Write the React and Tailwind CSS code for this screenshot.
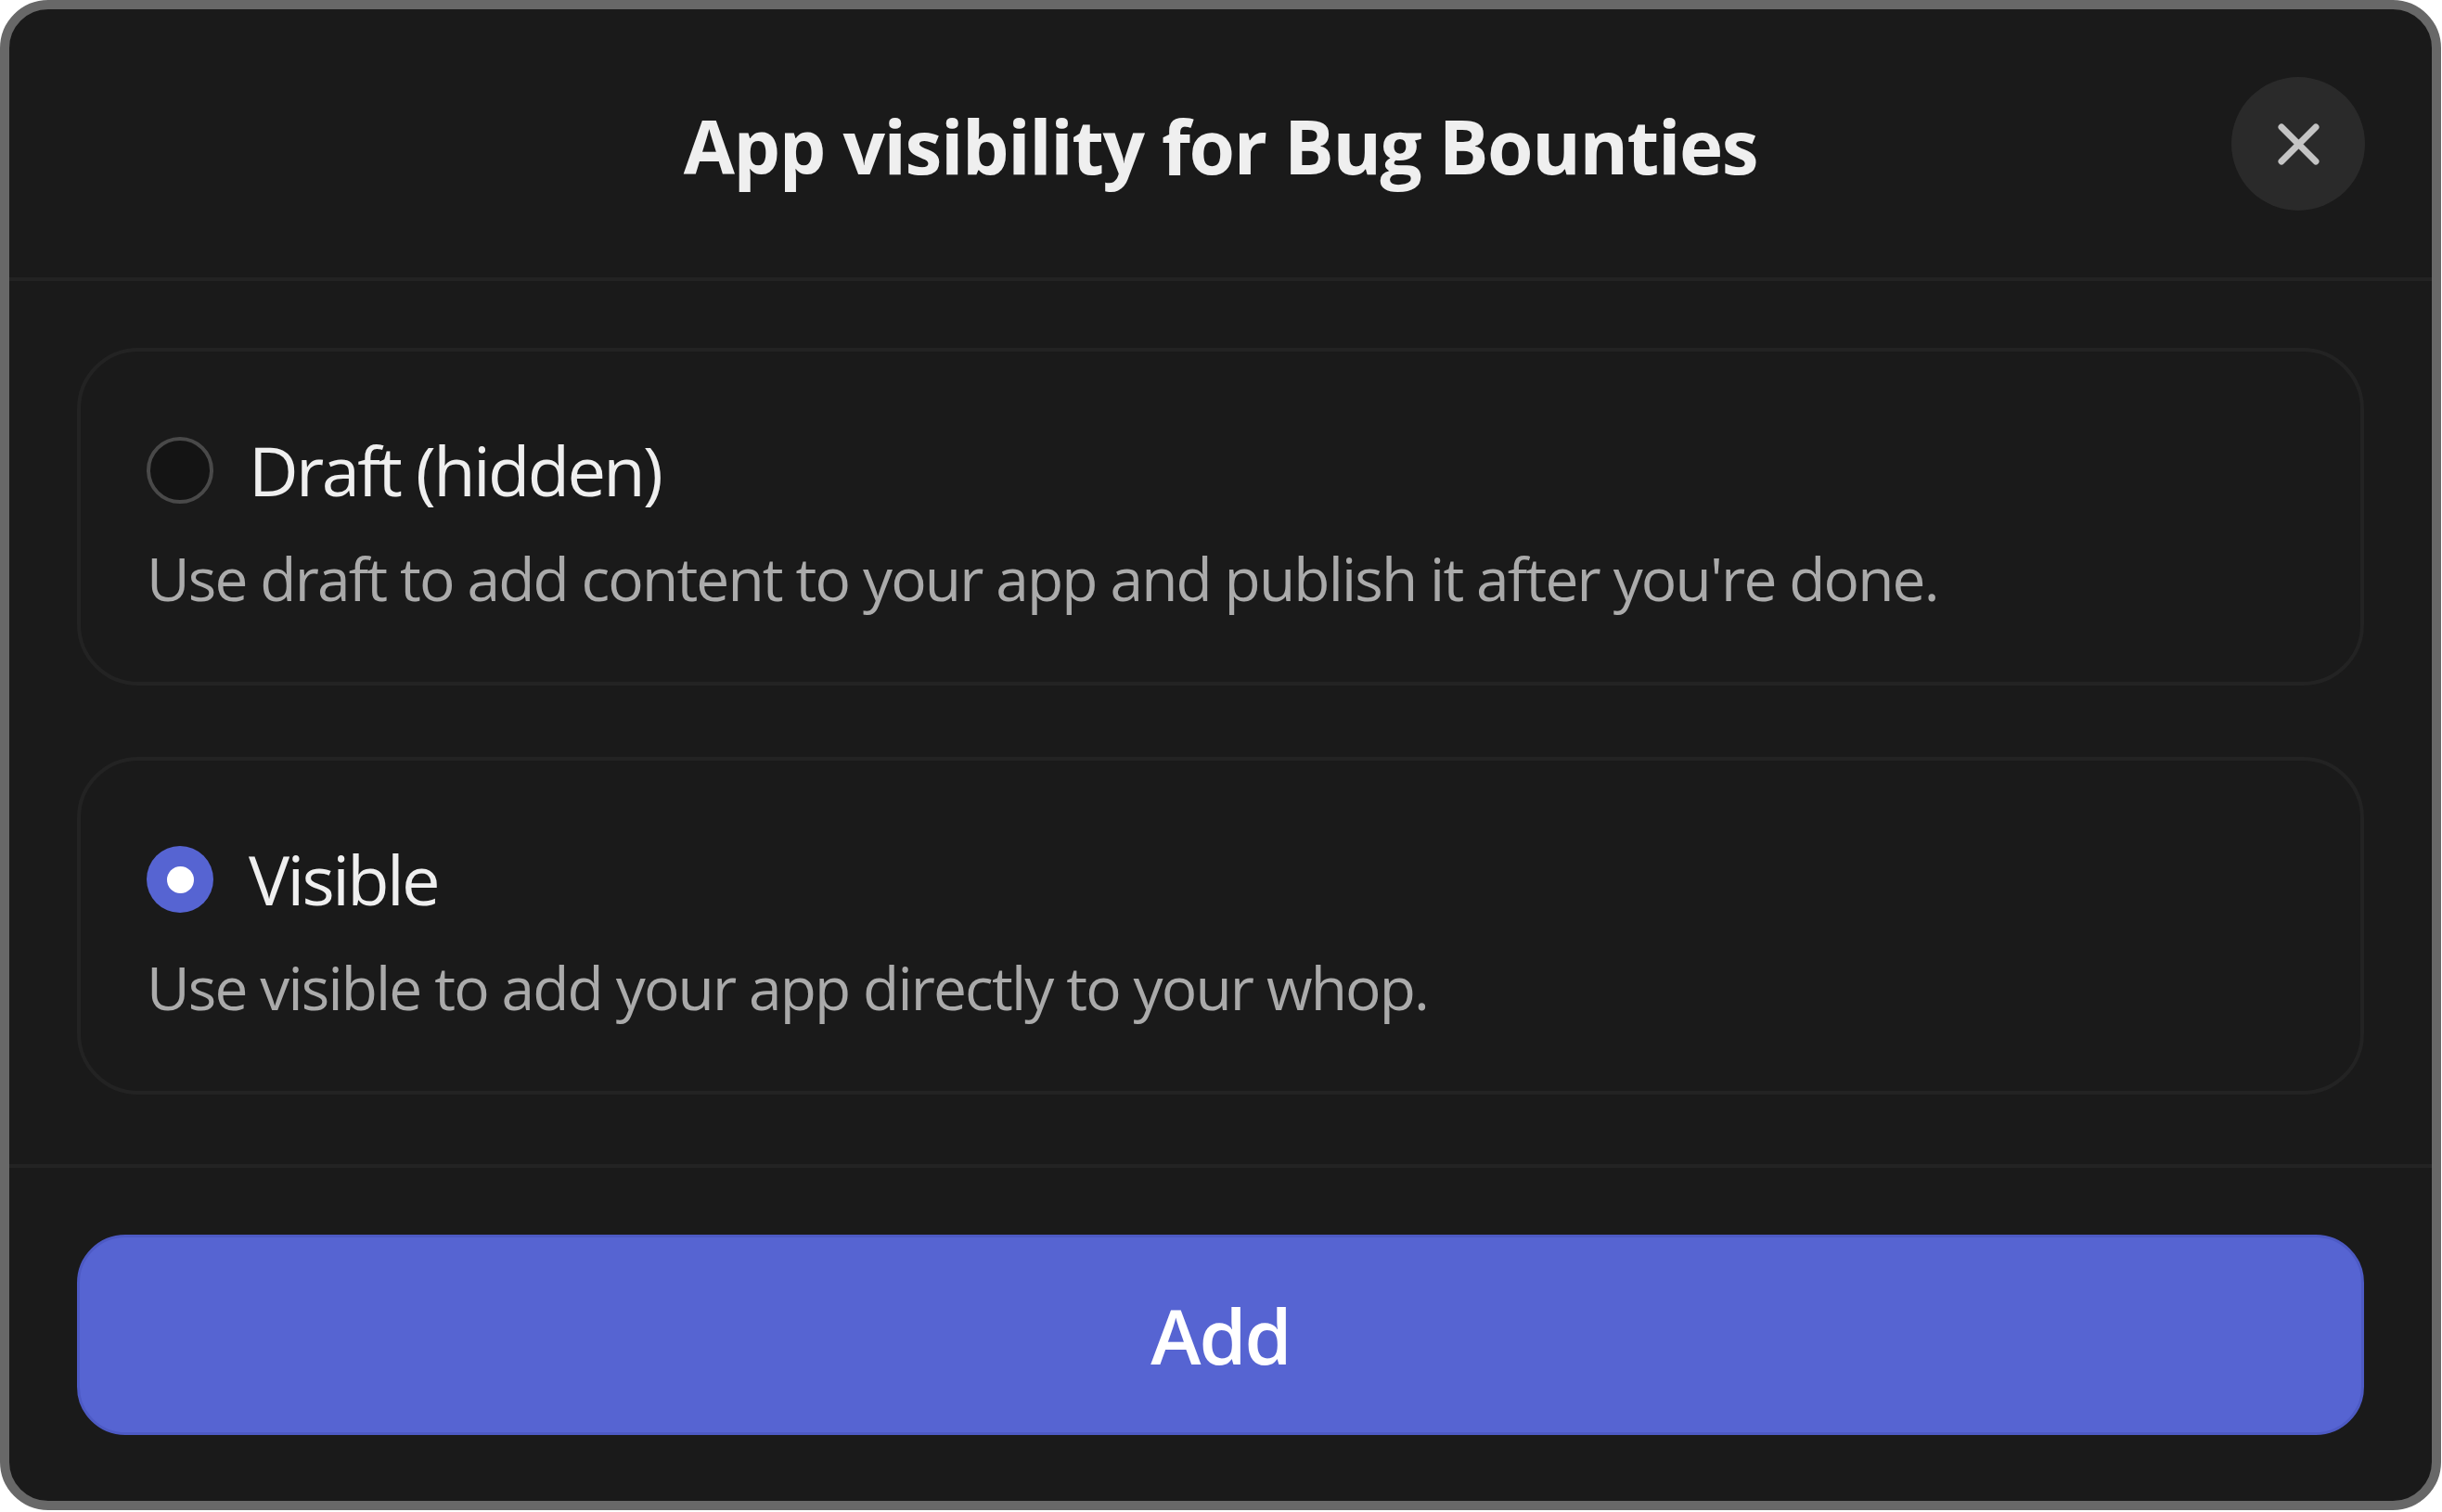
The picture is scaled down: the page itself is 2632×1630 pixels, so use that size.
const options = [
  {
    id: "draft",
    label: "Draft (hidden)",
    description: "Use draft to add content to your app and publish it after you're done.",
  },
  {
    id: "visible",
    label: "Visible",
    description: "Use visible to add your app directly to your whop.",
  },
];

const Radio = ({ checked }) =>
  checked ? (
    <span className="flex h-[72px] w-[72px] shrink-0 items-center justify-center rounded-full bg-[#5664d2]">
      <span className="h-[29px] w-[29px] rounded-full bg-white" />
    </span>
  ) : (
    <span className="h-[72px] w-[72px] shrink-0 rounded-full border-[4px] border-[#494949] bg-[#141414]" />
  );

const VisibilityOption = ({ option, checked }) => (
  <div className="flex h-[364px] flex-col rounded-[66px] border-[4px] border-[#232323] px-[71px] pt-[80px]">
    <div className="flex h-[96px] items-center gap-[38px]">
      <Radio checked={checked} />
      <span className="text-[74px] leading-[96px] tracking-[-2.6px] text-[#efefef]">{option.label}</span>
    </div>
    <p className="mt-[27px] text-[64px] leading-[83px] tracking-[-1.85px] text-[#aaaaaa]">{option.description}</p>
  </div>
);

export default function App() {
  const selected = "visible";

  return (
    <div className="h-[1630px] w-[2632px] bg-white font-['Open_Sans',sans-serif]">
      <div className="flex h-[1628px] w-[2631px] flex-col overflow-hidden rounded-[52px] border-[10px] border-[#686868] bg-[#1a1a1a]">
        {/* Header */}
        <div className="relative flex h-[293px] shrink-0 items-center justify-center border-b-[4px] border-[#232323] pt-[4px]">
          <h1 className="text-[80px] font-bold leading-none tracking-[-1.4px] text-[#efefef]">App visibility for Bug Bounties</h1>
          <button className="absolute right-[72px] top-[73px] flex h-[144px] w-[144px] items-center justify-center rounded-full bg-[#2a2a2a]">
            <svg width="45" height="45" viewBox="0 0 45 45" fill="none" stroke="#c4c4c4" strokeWidth="7" strokeLinecap="round">
              <path d="M4 4L41 41M41 4L4 41" />
            </svg>
          </button>
        </div>

        {/* Options */}
        <div className="flex flex-col gap-[77px] border-b-[4px] border-[#232323] px-[73px] pb-[75px] pt-[72px]">
          {options.map((option) => (
            <VisibilityOption key={option.id} option={option} checked={option.id === selected} />
          ))}
        </div>

        {/* Footer */}
        <div className="px-[73px] pt-[72px]">
          <button className="flex h-[216px] w-full items-center justify-center rounded-[52px] border-[3px] border-[#4d5ac4] bg-[#5664d2] text-[82px] font-semibold tracking-[-2px] text-white">
            Add
          </button>
        </div>
      </div>
    </div>
  );
}
